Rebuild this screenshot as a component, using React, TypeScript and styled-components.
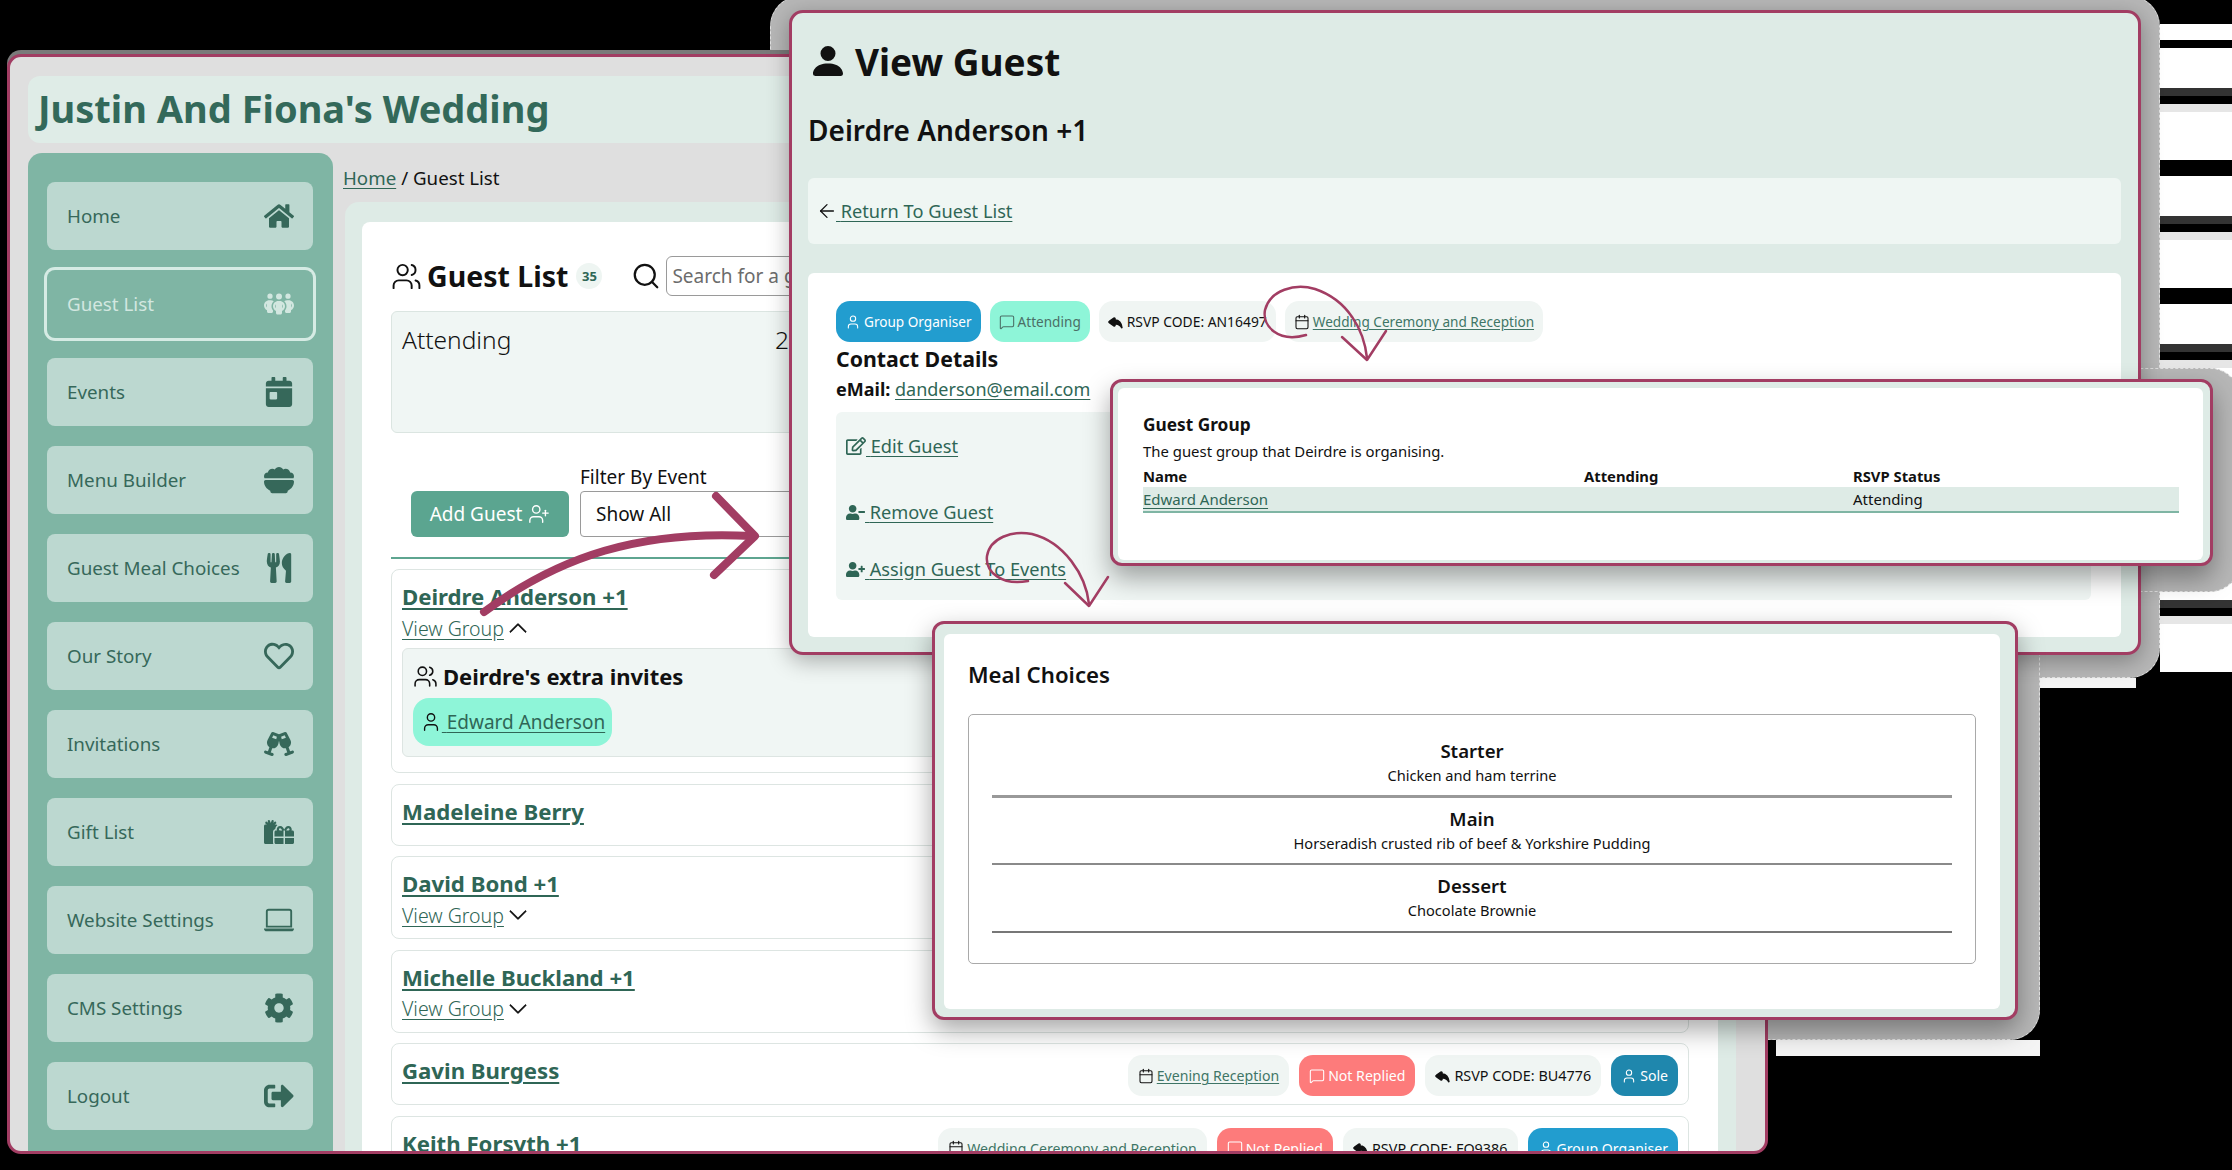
import React from "react";
import styled, { createGlobalStyle } from "styled-components";
import { ArrowLeft, Calendar, MessageSquare, Search, User, UserPlus, Users } from "lucide-react";
import { BsChevronDown, BsChevronUp, BsLaptop, BsPersonFill, BsReplyFill } from "react-icons/bs";
import { FaCalendarDay, FaCog, FaGifts, FaHome, FaRegEdit, FaRegHeart, FaSignOutAlt, FaUserMinus, FaUserPlus, FaUtensils } from "react-icons/fa";
import { FaBowlFood, FaChampagneGlasses, FaPeopleGroup } from "react-icons/fa6";

const GlobalStyle = createGlobalStyle`
  html, body { margin: 0; padding: 0; background: #000; }
  * { box-sizing: border-box; }
  body { font-family: "Noto Sans", "Liberation Sans", sans-serif; color: #111; }
`;

const navItems = [
  { label: "Home", icon: <FaHome /> },
  { label: "Guest List", icon: <FaPeopleGroup />, active: true },
  { label: "Events", icon: <FaCalendarDay /> },
  { label: "Menu Builder", icon: <FaBowlFood /> },
  { label: "Guest Meal Choices", icon: <FaUtensils /> },
  { label: "Our Story", icon: <FaRegHeart /> },
  { label: "Invitations", icon: <FaChampagneGlasses /> },
  { label: "Gift List", icon: <FaGifts /> },
  { label: "Website Settings", icon: <BsLaptop /> },
  { label: "CMS Settings", icon: <FaCog /> },
  { label: "Logout", icon: <FaSignOutAlt /> },
];

function App() {
  return (
    <Canvas>
      <GlobalStyle />
      <Stripes />
      <Band $x={1776} $y={1040} $w={264} $h={16} />
      <Band $x={2040} $y={678} $w={96} $h={10} />
      <Halo $x={770} $y={-4} $w={1390} $h={682} />
      <Halo $x={1760} $y={368} $w={480} $h={224} />
      <Halo $x={1700} $y={600} $w={340} $h={440} />

      <MainWindow>
        <TitleBar>Justin And Fiona's Wedding</TitleBar>
        <MainGrid>
          <Sidebar>
            {navItems.map((item) => (
              <NavItem key={item.label} $active={item.active}>
                {item.label}
                <NavIcon>{item.icon}</NavIcon>
              </NavItem>
            ))}
          </Sidebar>
          <Content>
            <Breadcrumb><TextLink>Home</TextLink> / Guest List</Breadcrumb>
            <Panel>
              <WhiteCard>
                <ListHead>
                  <Users size={31} strokeWidth={1.5} />
                  <ListTitle>Guest List</ListTitle>
                  <CountBadge>35</CountBadge>
                  <SearchIcon><Search size={30} strokeWidth={1.8} /></SearchIcon>
                  <SearchBox>Search for a guest</SearchBox>
                </ListHead>
                <StatCard>
                  <StatLabel>Attending</StatLabel>
                  <StatLabel>28</StatLabel>
                </StatCard>
                <FilterRow>
                  <AddButton>Add Guest <UserPlus size={22} strokeWidth={1.5} /></AddButton>
                  <FilterColumn>
                    <FilterLabel>Filter By Event</FilterLabel>
                    <SelectBox>Show All</SelectBox>
                  </FilterColumn>
                </FilterRow>
                <Divider />
                <RowList>
                  <Row>
                    <RowMain>
                      <GuestName>Deirdre Anderson +1</GuestName>
                      <ViewGroup><TextLink>View Group</TextLink> <BsChevronUp size={20} /></ViewGroup>
                      <GroupPanel>
                        <GroupTitle><Users size={25} strokeWidth={1.5} /> Deirdre's extra invites</GroupTitle>
                        <GuestChip><User size={22} strokeWidth={1.5} /><TextLink>{"\u00a0"}Edward Anderson</TextLink></GuestChip>
                      </GroupPanel>
                    </RowMain>
                  </Row>
                  <Row><RowMain><GuestName>Madeleine Berry</GuestName></RowMain><RowSpacer /></Row>
                  <Row>
                    <RowMain>
                      <GuestName>David Bond +1</GuestName>
                      <ViewGroup><TextLink>View Group</TextLink> <BsChevronDown size={20} /></ViewGroup>
                    </RowMain>
                  </Row>
                  <Row>
                    <RowMain>
                      <GuestName>Michelle Buckland +1</GuestName>
                      <ViewGroup><TextLink>View Group</TextLink> <BsChevronDown size={20} /></ViewGroup>
                    </RowMain>
                  </Row>
                  <Row>
                    <RowMain><GuestName>Gavin Burgess</GuestName></RowMain>
                    <BadgeRow>
                      <Badge $kind="plain"><Calendar /><BadgeLink>Evening Reception</BadgeLink></Badge>
                      <Badge $kind="alert"><MessageSquare />Not Replied</Badge>
                      <Badge $kind="plain"><BsReplyFill /><RsvpCode>RSVP CODE: BU4776</RsvpCode></Badge>
                      <Badge $kind="dark"><User />Sole</Badge>
                    </BadgeRow>
                  </Row>
                  <Row>
                    <RowMain><GuestName>Keith Forsyth +1</GuestName></RowMain>
                    <BadgeRow>
                      <Badge $kind="plain"><Calendar /><BadgeLink>Wedding Ceremony and Reception</BadgeLink></Badge>
                      <Badge $kind="alert"><MessageSquare />Not Replied</Badge>
                      <Badge $kind="plain"><BsReplyFill /><RsvpCode>RSVP CODE: FO9386</RsvpCode></Badge>
                      <Badge $kind="blue"><User />Group Organiser</Badge>
                    </BadgeRow>
                  </Row>
                </RowList>
              </WhiteCard>
            </Panel>
          </Content>
        </MainGrid>
      </MainWindow>

      <ViewWindow>
        <ViewTitle><BsPersonFill size={40} />View Guest</ViewTitle>
        <ViewName>Deirdre Anderson +1</ViewName>
        <ReturnCard><ArrowLeft size={22} strokeWidth={1.4} /><TextLink>{"\u00a0"}Return To Guest List</TextLink></ReturnCard>
        <ViewCard>
          <ViewBadges>
            <Badge $kind="blue"><User />Group Organiser</Badge>
            <Badge $kind="mint"><MessageSquare />Attending</Badge>
            <Badge $kind="plain"><BsReplyFill /><RsvpCode>RSVP CODE: AN16497</RsvpCode></Badge>
            <Badge $kind="plain"><Calendar /><BadgeLink>Wedding Ceremony and Reception</BadgeLink></Badge>
          </ViewBadges>
          <ContactTitle>Contact Details</ContactTitle>
          <ContactLine><strong>eMail:</strong> <TextLink>danderson@email.com</TextLink></ContactLine>
          <ActionPanel>
            <ActionRow $top={0}><FaRegEdit size={20} /><TextLink>{"\u00a0"}Edit Guest</TextLink></ActionRow>
            <ActionRow $top={42}><FaUserMinus size={19} /><TextLink>{"\u00a0"}Remove Guest</TextLink></ActionRow>
            <ActionRow $top={33}><FaUserPlus size={19} /><TextLink>{"\u00a0"}Assign Guest To Events</TextLink></ActionRow>
          </ActionPanel>
        </ViewCard>
      </ViewWindow>

      <GroupWindow>
        <GroupCard>
          <GroupHeading>Guest Group</GroupHeading>
          <GroupText>The guest group that Deirdre is organising.</GroupText>
          <TableHead><span>Name</span><span>Attending</span><span>RSVP Status</span></TableHead>
          <TableRow><TextLink>Edward Anderson</TextLink><span /><span>Attending</span></TableRow>
        </GroupCard>
      </GroupWindow>

      <MealWindow>
        <MealCard>
          <MealTitle>Meal Choices</MealTitle>
          <MealBox>
            <MealItem $rule="#999" $rows={3}><MealCourse>Starter</MealCourse><MealDish>Chicken and ham terrine</MealDish></MealItem>
            <MealItem $rule="#8a8a8a" $rows={2}><MealCourse>Main</MealCourse><MealDish>Horseradish crusted rib of beef &amp; Yorkshire Pudding</MealDish></MealItem>
            <MealItem $rule="#777" $rows={2}><MealCourse>Dessert</MealCourse><MealDish>Chocolate Brownie</MealDish></MealItem>
          </MealBox>
        </MealCard>
      </MealWindow>

      <Arrows viewBox="0 0 2232 1170">
        <path d="M484 612 C 560 556, 640 530, 752 536" strokeWidth="8" />
        <path d="M716 496 L755 536 L714 575" strokeWidth="8" />
        <path d="M1306 335 C 1278 343, 1262 326, 1265 310 C 1270 290, 1295 283, 1315 289 C 1348 300, 1364 330, 1367 358" strokeWidth="2.5" />
        <path d="M1342 337 L1367 360 L1386 331" strokeWidth="2.5" />
        <path d="M1028 581 C 1002 586, 985 572, 987 556 C 990 538, 1012 530, 1032 534 C 1064 542, 1086 575, 1089 604" strokeWidth="2.5" />
        <path d="M1065 583 L1089 606 L1108 577" strokeWidth="2.5" />
      </Arrows>
    </Canvas>
  );
}

export default App;

const Canvas = styled.div`
  position: relative;
  width: 2232px;
  height: 1170px;
  overflow: hidden;
  background: #000;
`;
const Stripes = styled.div`
  position: absolute;
  left: 2160px;
  top: 0;
  width: 72px;
  height: 672px;
  background:
    linear-gradient(#000 0 24px, #fff 24px 40px, #000 40px 48px, transparent 48px),
    repeating-linear-gradient(#fff 48px 88px, #333 88px 96px, #000 96px 104px, #e6e6e6 104px 112px, #fff 112px 160px, #000 160px 176px);
`;
const Band = styled.div<{ $x: number; $y: number; $w: number; $h: number }>`
  position: absolute;
  left: ${(p) => p.$x}px;
  top: ${(p) => p.$y}px;
  width: ${(p) => p.$w}px;
  height: ${(p) => p.$h}px;
  background: #f4f4f4;
`;
const Halo = styled.div<{ $x: number; $y: number; $w: number; $h: number }>`
  position: absolute;
  left: ${(p) => p.$x}px;
  top: ${(p) => p.$y}px;
  width: ${(p) => p.$w}px;
  height: ${(p) => p.$h}px;
  background: #b7b7b7;
  border: 1px dashed #e2e2e2;
  border-radius: 30px;
`;
const MainWindow = styled.div`
  position: absolute;
  left: 7px;
  top: 54px;
  width: 1761px;
  height: 1100px;
  display: flex;
  flex-direction: column;
  gap: 10px;
  padding: 19px 29px 0 18px;
  overflow: hidden;
  background: #dfdfdf;
  border: 3px solid #a23d63;
  border-radius: 14px;
  box-shadow: 0 -4px 0 #7a7a7a;
`;
const TitleBar = styled.div`
  flex: 0 0 67px;
  display: flex;
  align-items: center;
  padding: 0 0 3px 10px;
  background: #dfece7;
  border-radius: 12px;
  color: #33695a;
  font-size: 38px;
  font-weight: 700;
`;
const MainGrid = styled.div`
  flex: 1;
  min-height: 0;
  display: grid;
  grid-template-columns: 305px 1fr;
  gap: 10px;
`;
const Sidebar = styled.nav`
  display: flex;
  flex-direction: column;
  gap: 20px;
  padding: 29px 20px 0 19px;
  background: #7fb5a4;
  border-radius: 14px 14px 0 0;
`;
const NavItem = styled.div<{ $active?: boolean }>`
  flex: 0 0 68px;
  display: flex;
  align-items: center;
  justify-content: space-between;
  padding: 0 19px 0 20px;
  border-radius: 8px;
  font-size: 18.8px;
  color: ${(p) => (p.$active ? "#d2e7e0" : "#36685a")};
  background: ${(p) => (p.$active ? "transparent" : "#bcd8d0")};
  ${(p) => p.$active && "box-shadow: 0 0 0 3px #d6ebe4;"}
`;
const NavIcon = styled.span`
  display: flex;
  font-size: 30px;
`;
const Content = styled.div`
  min-width: 0;
  display: flex;
  flex-direction: column;
`;
const Breadcrumb = styled.div`
  flex: 0 0 49px;
  display: flex;
  align-items: center;
  gap: 5px;
  font-size: 18.7px;
`;
const TextLink = styled.span`
  color: #2f6656;
  text-decoration: underline;
  text-underline-offset: 3px;
`;
const Panel = styled.div`
  flex: 1;
  margin-left: 2px;
  padding: 20px 18px 0 17px;
  background: #deebe6;
  border-radius: 14px 14px 0 0;
`;
const WhiteCard = styled.div`
  height: 100%;
  padding: 34px 29px 0;
  background: #fff;
  border-radius: 8px 8px 0 0;
`;
const ListHead = styled.div`
  display: flex;
  align-items: center;
  height: 40px;
`;
const ListTitle = styled.div`
  margin-left: 5px;
  font-size: 28.5px;
  font-weight: 700;
`;
const CountBadge = styled.span`
  width: 26px;
  height: 26px;
  margin-left: 8px;
  display: flex;
  align-items: center;
  justify-content: center;
  border-radius: 50%;
  background: #eef5f2;
  color: #2f6656;
  font-size: 13px;
  font-weight: 700;
`;
const SearchIcon = styled.span`
  display: flex;
  margin: 0 5px 0 29px;
`;
const SearchBox = styled.div`
  width: 400px;
  height: 40px;
  display: flex;
  align-items: center;
  padding-left: 5px;
  border: 1px solid #9a9a9a;
  border-radius: 6px;
  color: #6c6c6c;
  font-size: 19px;
`;
const StatCard = styled.div`
  height: 122px;
  margin-top: 15px;
  display: grid;
  grid-template-columns: 373px 1fr;
  padding: 11px 10px;
  background: #f0f6f4;
  border: 1px solid #dbe5e1;
  border-radius: 6px;
`;
const StatLabel = styled.div`
  font-size: 24.5px;
  font-weight: 300;
`;
const FilterRow = styled.div`
  margin-top: 32px;
  padding-left: 20px;
  display: flex;
  align-items: flex-end;
  gap: 11px;
`;
const AddButton = styled.div`
  width: 158px;
  height: 46px;
  display: flex;
  align-items: center;
  justify-content: center;
  gap: 6px;
  background: #5ba590;
  border-radius: 6px;
  color: #fff;
  font-size: 19px;
`;
const FilterColumn = styled.div`
  display: flex;
  flex-direction: column;
  gap: 2px;
`;
const FilterLabel = styled.div`
  height: 24px;
  font-size: 19px;
  line-height: 24px;
`;
const SelectBox = styled.div`
  width: 420px;
  height: 46px;
  display: flex;
  align-items: center;
  padding-left: 15px;
  background: #fff;
  border: 1px solid #9a9a9a;
  border-radius: 4px;
  font-size: 19px;
`;
const Divider = styled.div`
  height: 2px;
  margin: 20px 0 10px;
  background: #5ea590;
`;
const RowList = styled.div`
  display: flex;
  flex-direction: column;
  gap: 10.6px;
`;
const Row = styled.div`
  display: flex;
  justify-content: space-between;
  padding: 11px 10px 8px;
  background: #fff;
  border: 1px solid #dde5e2;
  border-radius: 8px;
`;
const RowSpacer = styled.div`
  height: 41px;
`;
const RowMain = styled.div`
  flex: 1;
  min-width: 0;
`;
const GuestName = styled.div`
  font-size: 22.2px;
  font-weight: 700;
  line-height: 32px;
  color: #2f6656;
  text-decoration: underline;
  text-underline-offset: 3px;
`;
const ViewGroup = styled.div`
  height: 30px;
  display: flex;
  align-items: center;
  gap: 4px;
  font-size: 19.5px;
  font-weight: 300;
  svg {
    stroke: currentColor;
    stroke-width: 0.5;
  }
`;
const GroupPanel = styled.div`
  height: 109px;
  margin: 5px 0 7px;
  padding: 12px 10px 0;
  background: #f0f6f4;
  border: 1px solid #dde5e2;
  border-radius: 6px;
`;
const GroupTitle = styled.div`
  display: flex;
  align-items: center;
  gap: 5px;
  height: 30px;
  font-size: 22px;
  font-weight: 700;
`;
const GuestChip = styled.div`
  width: 199px;
  height: 48px;
  margin-top: 7px;
  display: flex;
  align-items: center;
  justify-content: center;
  background: #8ef5d8;
  border-radius: 16px;
  font-size: 19px;
`;
const BadgeRow = styled.div`
  display: flex;
  gap: 10px;
  flex-shrink: 0;
  font-size: 14.1px;
`;
const ViewBadges = styled(BadgeRow)`
  gap: 9px;
  font-size: 13.6px;
  > div {
    padding: 0 9px;
  }
`;
const kindColors: Record<string, [string, string]> = {
  plain: ["#f0f5f3", "#111"],
  alert: ["#fd7b7b", "#fff"],
  dark: ["#1f87ad", "#fff"],
  blue: ["#229dcf", "#fff"],
  mint: ["#8ef5d8", "#4b6f66"],
};
const Badge = styled.div<{ $kind: string }>`
  height: 41px;
  display: flex;
  align-items: center;
  gap: 3px;
  padding: 0 10px;
  border-radius: 14px;
  white-space: nowrap;
  background: ${(p) => kindColors[p.$kind][0]};
  color: ${(p) => kindColors[p.$kind][1]};
  svg {
    width: 16px;
    height: 16px;
    stroke-width: 1.6;
    flex-shrink: 0;
  }
`;
const RsvpCode = styled.span`
  font-size: 1.02em;
`;
const BadgeLink = styled.span`
  color: #3f7566;
  text-decoration: underline;
  text-underline-offset: 2px;
`;
const ViewWindow = styled.div`
  position: absolute;
  left: 789px;
  top: 10px;
  width: 1352px;
  height: 645px;
  display: flex;
  flex-direction: column;
  padding: 25px 17px 15px 16px;
  background: #deebe6;
  border: 3px solid #a23d63;
  border-radius: 14px;
  box-shadow: 0 6px 22px rgba(0, 0, 0, 0.3);
`;
const ViewTitle = styled.div`
  display: flex;
  align-items: center;
  gap: 7px;
  height: 46px;
  font-size: 37px;
  font-weight: 700;
`;
const ViewName = styled.div`
  margin-top: 28px;
  height: 36px;
  line-height: 36px;
  font-size: 28px;
  font-weight: 600;
`;
const ReturnCard = styled.div`
  flex: 0 0 66px;
  margin-top: 30px;
  padding-left: 8px;
  display: flex;
  align-items: center;
  background: #eff6f3;
  border-radius: 6px;
  font-size: 18.2px;
  svg {
    margin-right: -2px;
  }
`;
const ViewCard = styled.div`
  flex: 1;
  margin-top: 29px;
  padding: 28px 30px 37px 28px;
  display: flex;
  flex-direction: column;
  background: #fff;
  border-radius: 6px;
`;
const ContactTitle = styled.div`
  margin-top: 3px;
  height: 28px;
  line-height: 28px;
  font-size: 21.3px;
  font-weight: 700;
`;
const ContactLine = styled.div`
  margin-top: 3px;
  height: 26px;
  line-height: 26px;
  font-size: 18px;
`;
const ActionPanel = styled.div`
  flex: 1;
  margin-top: 10px;
  padding: 22px 10px 0;
  background: #f0f6f4;
  border-radius: 6px;
`;
const ActionRow = styled.div<{ $top: number }>`
  height: 24px;
  margin-top: ${(p) => p.$top}px;
  display: flex;
  align-items: center;
  font-size: 18.2px;
  color: #2f6656;
`;
const GroupWindow = styled.div`
  position: absolute;
  left: 1110px;
  top: 379px;
  width: 1103px;
  height: 187px;
  padding: 6px 7px 3px 5px;
  background: #deebe6;
  border: 3px solid #a23d63;
  border-radius: 12px;
  box-shadow: 0 12px 26px rgba(0, 0, 0, 0.35);
`;
const GroupCard = styled.div`
  height: 100%;
  padding: 27px 24px 0 25px;
  background: #fff;
  border-radius: 6px;
`;
const GroupHeading = styled.div`
  height: 20px;
  line-height: 20px;
  font-size: 17.3px;
  font-weight: 700;
`;
const GroupText = styled.div`
  margin-top: 6px;
  height: 20px;
  line-height: 20px;
  font-size: 14.9px;
`;
const TableHead = styled.div`
  margin-top: 4px;
  height: 22px;
  display: grid;
  grid-template-columns: 441px 269px 1fr;
  align-items: center;
  font-size: 14.8px;
  font-weight: 700;
`;
const TableRow = styled.div`
  height: 26px;
  display: grid;
  grid-template-columns: 441px 269px 1fr;
  align-items: center;
  background: #deebe6;
  border-bottom: 2px solid #7fb5a4;
  font-size: 15px;
`;
const MealWindow = styled.div`
  position: absolute;
  left: 932px;
  top: 621px;
  width: 1086px;
  height: 399px;
  padding: 10px 15px 8px 9px;
  background: #deebe6;
  border: 3px solid #a23d63;
  border-radius: 12px;
  box-shadow: 0 10px 26px rgba(0, 0, 0, 0.35);
`;
const MealCard = styled.div`
  height: 100%;
  padding: 27px 24px 0;
  background: #fff;
  border-radius: 6px;
`;
const MealTitle = styled.div`
  height: 28px;
  line-height: 28px;
  font-size: 22.2px;
  font-weight: 600;
`;
const MealBox = styled.div`
  height: 250px;
  margin-top: 25px;
  padding: 15px 23px 0;
  border: 1px solid #a9a9a9;
  border-radius: 5px;
`;
const MealItem = styled.div<{ $rule: string; $rows: number }>`
  height: 67.5px;
  padding-top: 9px;
  text-align: center;
  border-bottom: ${(p) => p.$rows}px solid ${(p) => p.$rule};
`;
const MealCourse = styled.div`
  height: 24px;
  line-height: 24px;
  font-size: 18.6px;
  font-weight: 600;
`;
const MealDish = styled.div`
  height: 24px;
  line-height: 24px;
  font-size: 14.6px;
`;
const Arrows = styled.svg`
  position: absolute;
  left: 0;
  top: 0;
  width: 2232px;
  height: 1170px;
  pointer-events: none;
  fill: none;
  stroke: #a23d63;
  stroke-linecap: round;
  stroke-linejoin: round;
`;
